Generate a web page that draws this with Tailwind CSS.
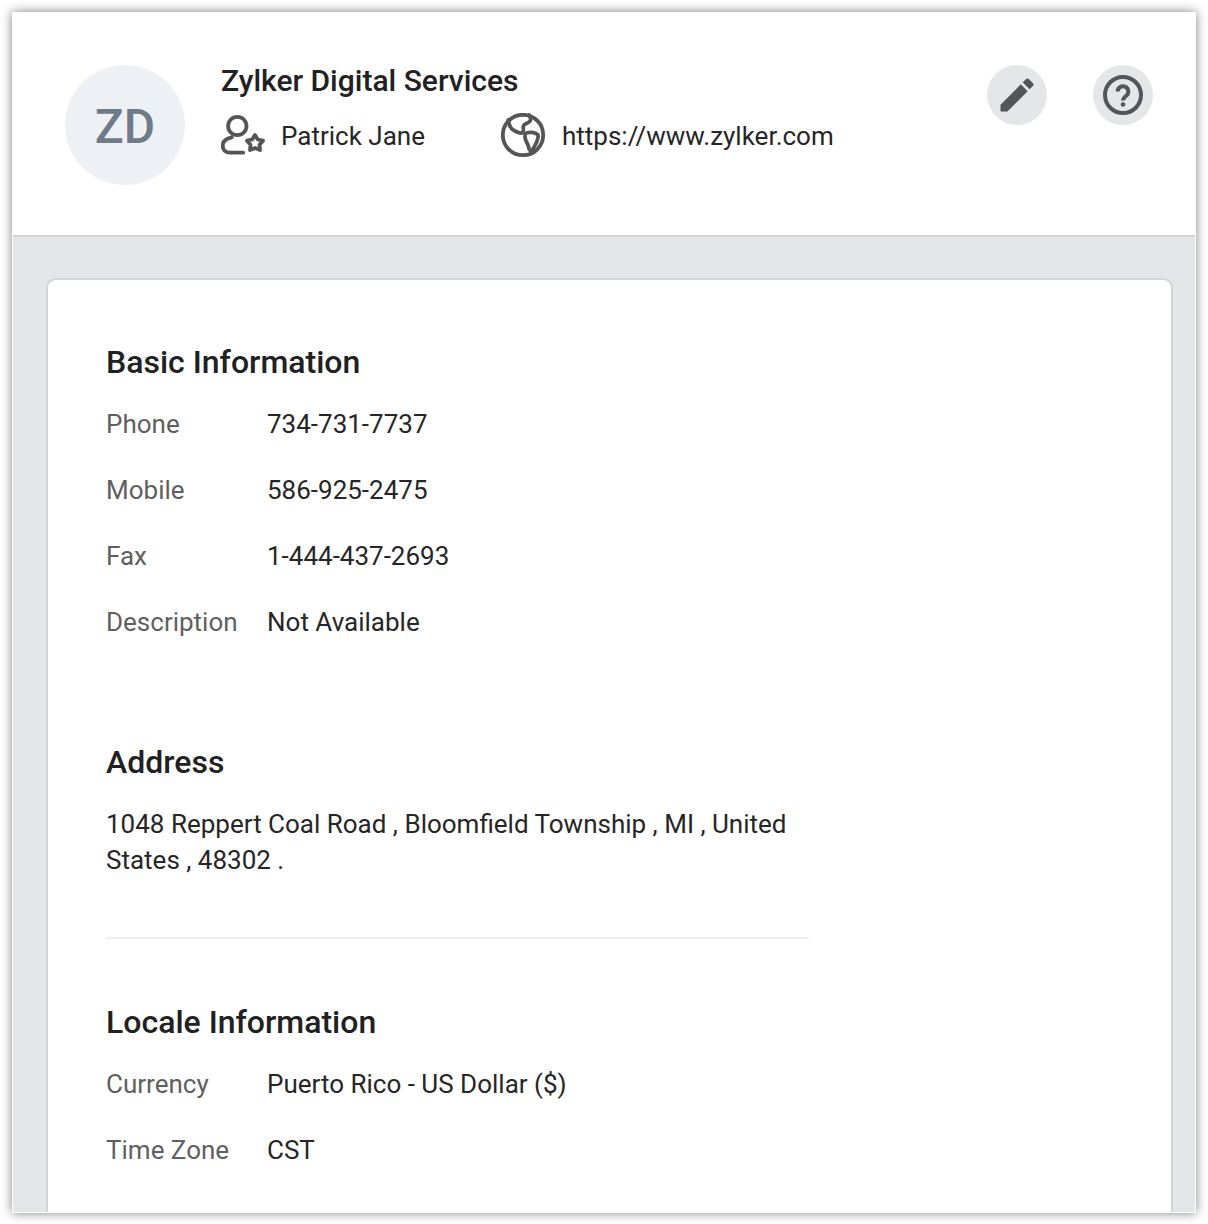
<!DOCTYPE html>
<html lang="en">
<head>
  <meta charset="UTF-8">
  <title>Zylker Digital Services</title>
  <script src="https://cdn.jsdelivr.net/npm/@tailwindcss/browser@4"></script>
</head>
<body class="bg-white h-[1224px] overflow-hidden font-['Roboto',sans-serif]">
  <div class="mx-[12px] mt-[12px] w-[1184px] h-[1201px] overflow-hidden bg-[#e3e5e7] border border-white shadow-[0_0_10px_rgba(0,0,0,0.5)]">
    <!-- header -->
    <header class="h-[224px] bg-white border-b-2 border-[#d2d4d7] flex pl-[52px] pt-[52px]">
      <div class="w-[120px] h-[120px] pt-[4px] rounded-full bg-[#edf1f5] flex items-center justify-center text-[48px] font-medium text-[#6f7a8a] shrink-0">ZD</div>
      <div class="ml-[36px]">
        <h1 class="text-[30px] leading-[32px] font-medium text-[#212121]">Zylker Digital Services</h1>
        <div class="flex items-center mt-[16px] text-[26px] leading-[36px] text-[#262626]">
          <svg class="w-[46px] h-[46px]" viewBox="0 0 46 46" fill="none" stroke="#555" stroke-width="3.8" stroke-linecap="round" stroke-linejoin="round">
            <g transform="translate(-1,-1)">
              <circle cx="17.3" cy="14" r="9.2"/>
              <path d="M11.700 25.300C6 26.500 2.700 29 2.700 33.500s3 7.200 7.500 7.200h13"/>
              <path d="M35 23l2.800 4.500 5.200 1.200-3.500 4 .5 5.300-5-2.100-5 2.100.5-5.300-3.500-4 5.200-1.200z"/>
            </g>
          </svg>
          <span class="ml-[14px] w-[220px]">Patrick Jane</span>
          <svg class="w-[46px] h-[46px]" viewBox="0 0 46 46" fill="none" stroke="#555" stroke-width="3.8" stroke-linecap="round" stroke-linejoin="round">
            <g transform="translate(-1,-1)">
              <circle cx="23" cy="23" r="20.200"/>
              <path d="M8.300 8C9 13 11 17 14 18.500C17 20 20 22 22 21C25 19 22 15 24 13C26 11 30 11 30.500 8C30.800 6 30 4 29 3"/>
              <path d="M25.500 21.500C28 19.500 36 20 38 23C39 27 36 32 33 37C31.500 39 29.500 39 29 36.500C28.500 32 25 29 25 25C25 23.500 25 22 25.500 21.500Z"/>
            </g>
          </svg>
          <span class="ml-[15px]">https://www.zylker.com</span>
        </div>
      </div>
      <div class="ml-auto flex gap-[46px] pr-[42px]">
        <button class="w-[60px] h-[60px] rounded-full bg-[#e5e6e8] flex items-center justify-center">
          <svg class="w-[44px] h-[44px]" viewBox="0 0 24 24" fill="#555"><path d="M3 21v-3.750L14.060 6.190l3.750 3.750L6.750 21H3zM20.710 7.040a1 1 0 0 0 0-1.410l-2.340-2.340a1 1 0 0 0-1.410 0l-1.830 1.830 3.750 3.750 1.830-1.830z"/></svg>
        </button>
        <button class="w-[60px] h-[60px] rounded-full bg-[#e5e6e8] flex items-center justify-center">
          <svg class="w-[48px] h-[48px]" viewBox="0 0 48 48" fill="none" stroke="#555" stroke-width="4" stroke-linecap="butt">
            <circle cx="24" cy="24" r="18"/>
            <path d="M18.700 20.500a5.300 5.300 0 1 1 8.800 4c-2.300 1.900-3.500 2.900-3.500 5" stroke-width="4"/>
            <circle cx="24" cy="33.500" r="2.300" fill="#555" stroke="none"/>
          </svg>
        </button>
      </div>
    </header>

    <!-- details card -->
    <main class="ml-[33px] mt-[41px] w-[1127px] h-[1000px] bg-white border-2 border-[#d2d4d7] rounded-[10px] pl-[58px] pt-[64px] text-[26px] leading-[36px] text-[#262626]">
      <h2 class="text-[32px] leading-[36px] font-medium text-[#212121]">Basic Information</h2>
      <dl class="mt-[26px] flex flex-col gap-[30px]">
        <div class="flex"><dt class="w-[161px] text-[#5f5f5f]">Phone</dt><dd>734-731-7737</dd></div>
        <div class="flex"><dt class="w-[161px] text-[#5f5f5f]">Mobile</dt><dd>586-925-2475</dd></div>
        <div class="flex"><dt class="w-[161px] text-[#5f5f5f]">Fax</dt><dd>1-444-437-2693</dd></div>
        <div class="flex"><dt class="w-[161px] text-[#5f5f5f]">Description</dt><dd>Not Available</dd></div>
      </dl>

      <h2 class="mt-[104px] text-[32px] leading-[36px] font-medium text-[#212121]">Address</h2>
      <p class="mt-[26px] w-[702px]">1048 Reppert Coal Road , Bloomfield Township , MI , United States , 48302 .</p>
      <hr class="mt-[59px] w-[703px] border-t-2 border-[#eeeeee]">

      <h2 class="mt-[65px] text-[32px] leading-[36px] font-medium text-[#212121]">Locale Information</h2>
      <dl class="mt-[26px] flex flex-col gap-[30px]">
        <div class="flex"><dt class="w-[161px] text-[#5f5f5f]">Currency</dt><dd>Puerto Rico - US Dollar ($)</dd></div>
        <div class="flex"><dt class="w-[161px] text-[#5f5f5f]">Time Zone</dt><dd>CST</dd></div>
      </dl>
    </main>
  </div>
</body>
</html>
